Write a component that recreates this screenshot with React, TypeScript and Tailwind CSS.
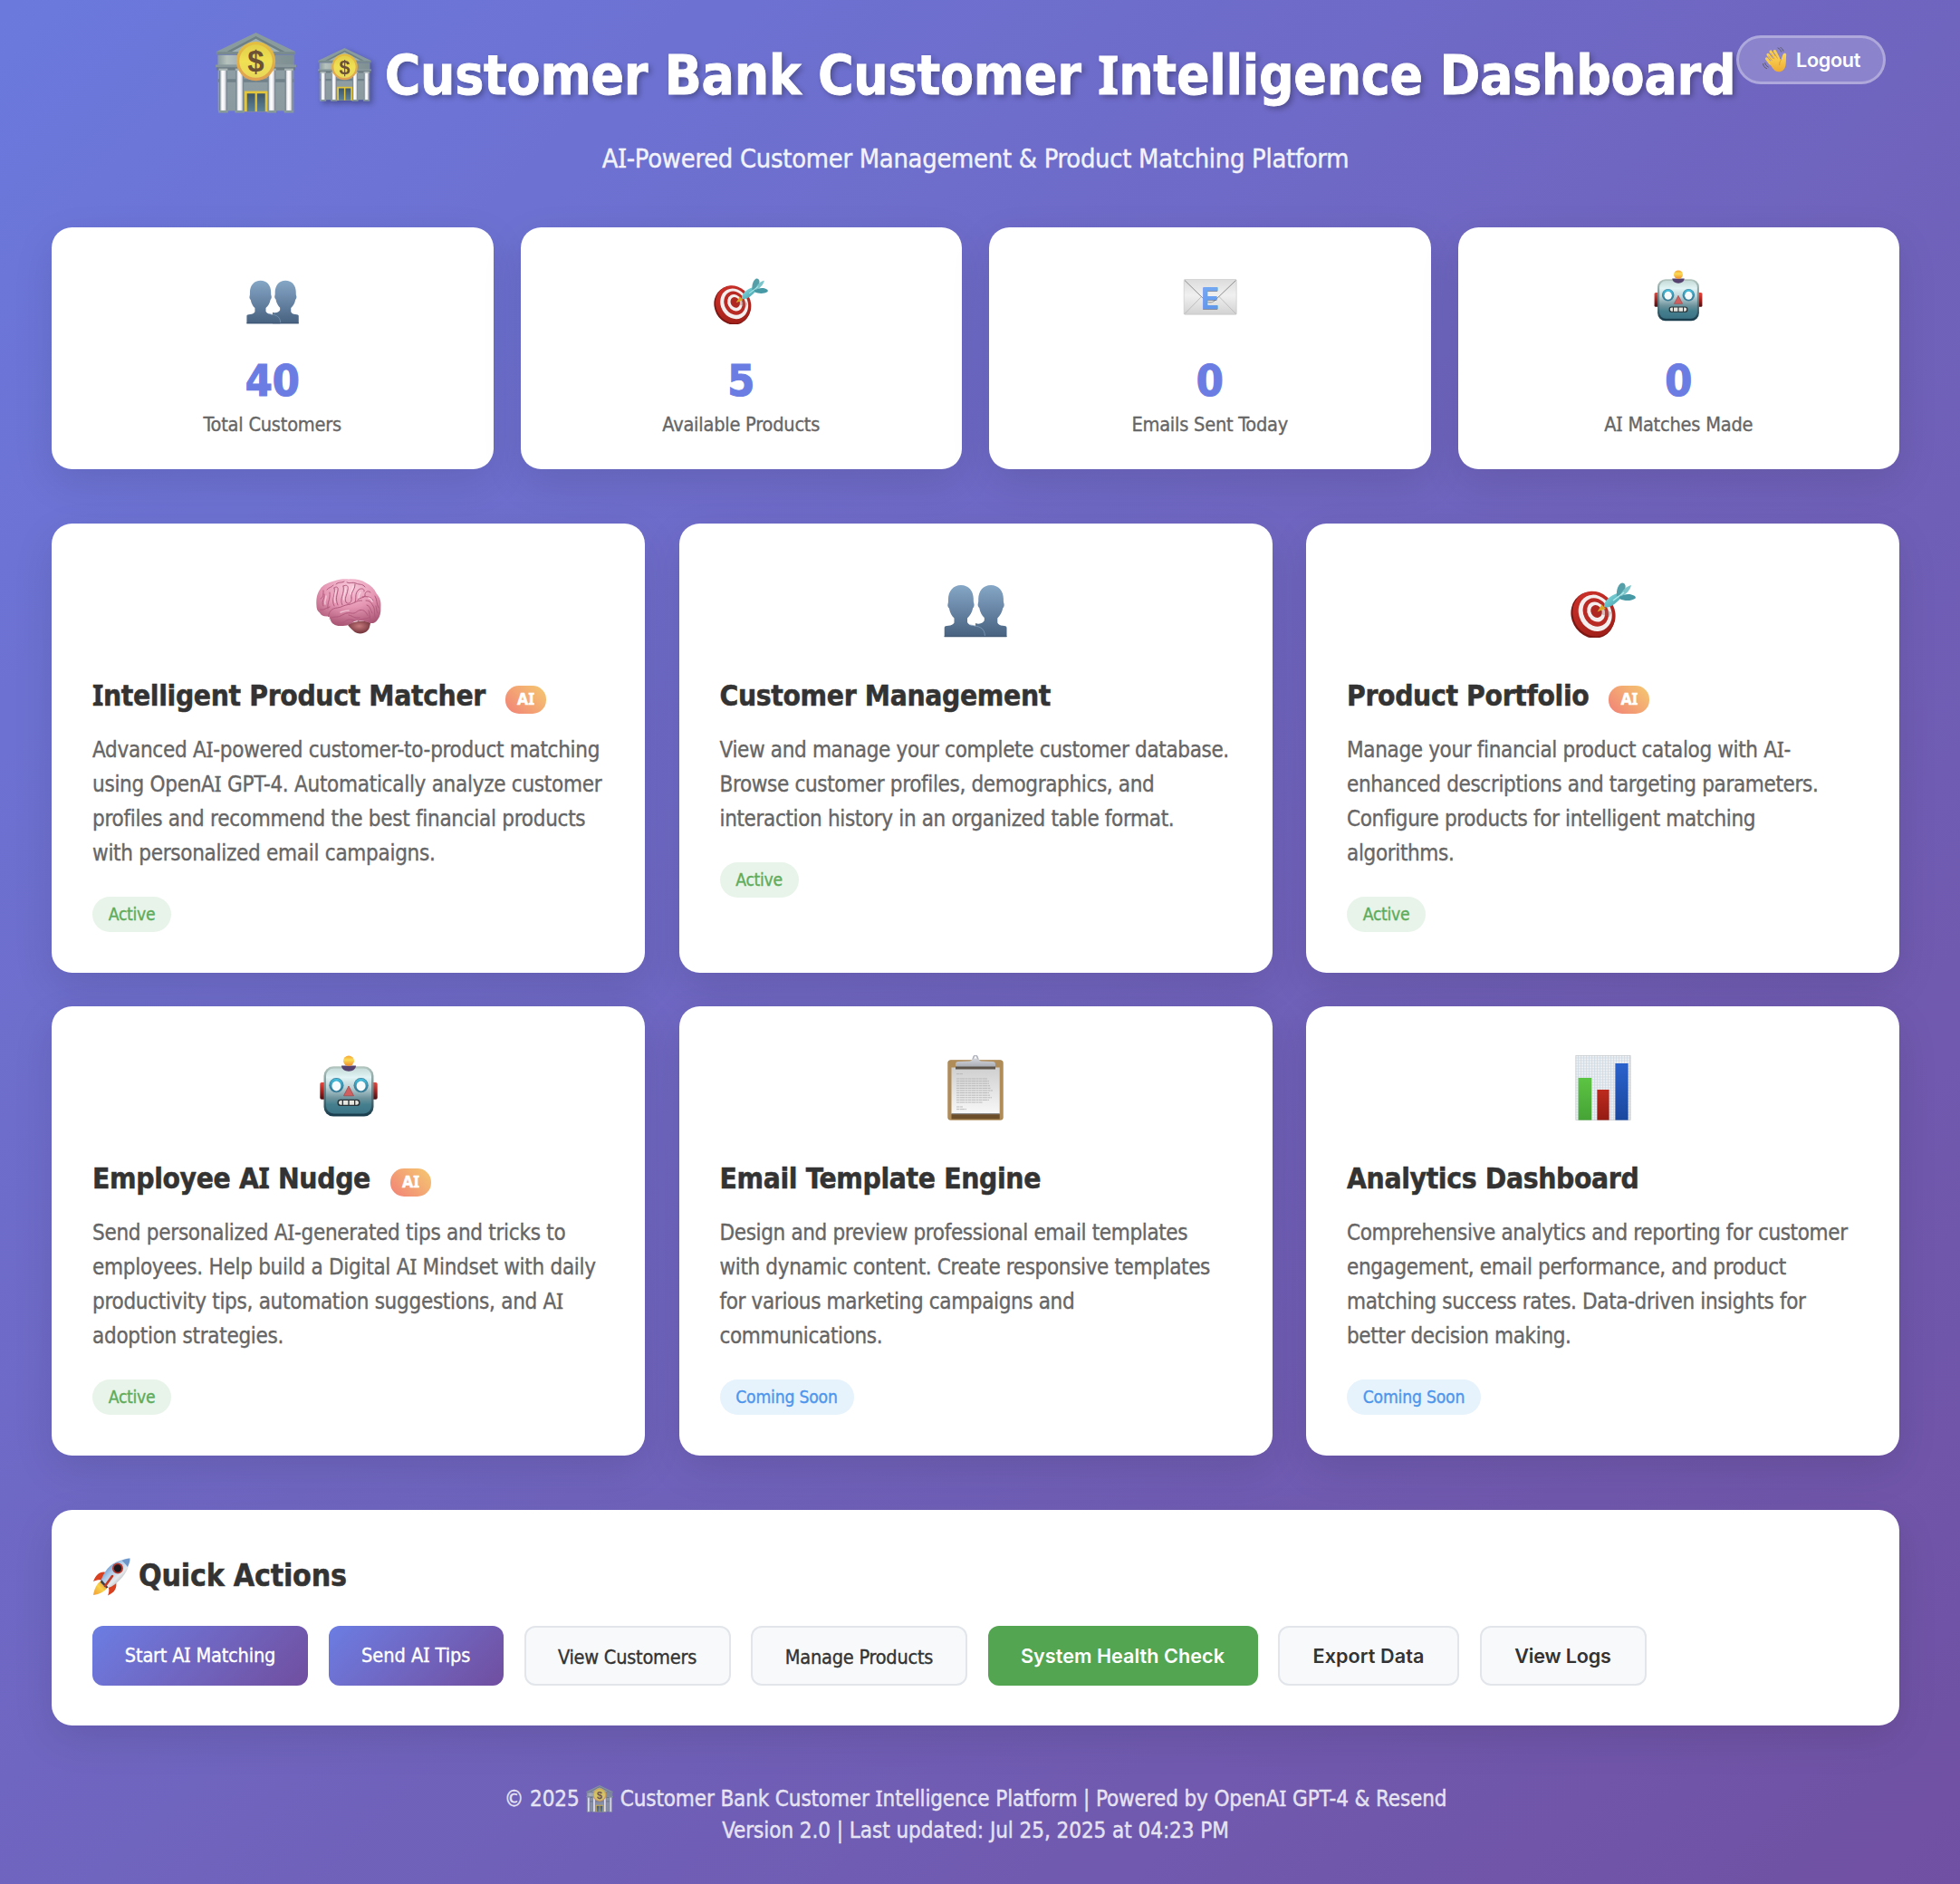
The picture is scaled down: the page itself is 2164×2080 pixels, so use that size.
import React, { Fragment } from "react";

type IconProps = { className?: string };

/* Capital I is set in a face that has serifs on that letter. */
function T({ children }: { children: string }) {
  return (
    <>
      {children.split(/(I)/).map((part, i) =>
        part === "I" ? (
          <span key={i} className="font-['Noto_Sans'] leading-[0]">
            I
          </span>
        ) : (
          <Fragment key={i}>{part}</Fragment>
        ),
      )}
    </>
  );
}

function Bank({ className }: IconProps) {
  return (
    <svg viewBox="0 0 100 100" className={className}>
      <defs>
        <linearGradient id="bk-wall" x1="0" x2="0" y1="0" y2="1">
          <stop offset="0" stopColor="#8fa0a6" />
          <stop offset="1" stopColor="#8b9a9f" />
        </linearGradient>
        <linearGradient id="bk-band" x1="0" x2="1">
          <stop offset="0" stopColor="#8b9c9c" />
          <stop offset=".12" stopColor="#b6c2bd" />
          <stop offset=".5" stopColor="#8b9a9e" />
          <stop offset="1" stopColor="#7f9092" />
        </linearGradient>
        <linearGradient id="bk-col" x1="0" x2="1">
          <stop offset="0" stopColor="#c9cbd2" />
          <stop offset=".35" stopColor="#ffffff" />
          <stop offset=".7" stopColor="#eeeef2" />
          <stop offset="1" stopColor="#a9acb8" />
        </linearGradient>
        <linearGradient id="bk-coin" x1="0" x2="0" y1="0" y2="1">
          <stop offset="0" stopColor="#e2d04a" />
          <stop offset=".5" stopColor="#f0e052" />
          <stop offset="1" stopColor="#e8d85a" />
        </linearGradient>
        <linearGradient id="bk-rim" x1="0" x2="0" y1="0" y2="1">
          <stop offset="0" stopColor="#e3bf3f" />
          <stop offset="1" stopColor="#e0a052" />
        </linearGradient>
        <linearGradient id="bk-door" x1="0" x2="0" y1="0" y2="1">
          <stop offset="0" stopColor="#3f5766" />
          <stop offset="1" stopColor="#5d8299" />
        </linearGradient>
      </defs>
      <rect x="3" y="28" width="94" height="69" fill="url(#bk-wall)" />
      <path d="M50 0 99 23.5V27H1v-3.500z" fill="#8a9b9d" />
      <path d="M50 4.500 86 23.500H14z" fill="#6f8085" />
      <path d="M50 7.500 80 23.500H20z" fill="#9fb1b5" />
      <path d="M1 24h98v3.500H1z" fill="#788a8d" />
      <rect x="3" y="28" width="94" height="12" fill="url(#bk-band)" />
      <path d="M0 40h100v3H0z" fill="#8a9a9c" />
      <path d="M1 43h98v3.500H1z" fill="#6b7b80" />
      <path d="M3 57.500h94v4H3z" fill="#70818a" />
      <path d="M34 46h32v11H34z" fill="#84969d" />
      {[6, 26.5, 66, 87.5].map((x) => (
        <g key={x}>
          <path d={`M${x - 1.5} 46h10v51h-10z`} fill="#76868f" />
          <rect x={x} y="45" width="7.300" height="52" fill="url(#bk-col)" />
          <path d={`M${x - 2} 44.500h11v2.500h-11z`} fill="#a9b4b6" />
          <path d={`M${x - 2.500} 96.500h12v3h-12z`} fill="#899a9b" />
        </g>
      ))}
      <path d="M36 72.500h28.500V98H36z" fill="#e4c63c" />
      <path d="M39 75.500h10V98H39zM51.500 75.500h10V98h-10z" fill="url(#bk-door)" />
      <circle cx="50" cy="35.500" r="24.300" fill="url(#bk-rim)" />
      <circle cx="50" cy="35.500" r="20.500" fill="url(#bk-coin)" />
      <text
        x="50"
        y="48.500"
        textAnchor="middle"
        fontFamily="Liberation Sans, sans-serif"
        fontWeight="700"
        fontSize="37"
        letterSpacing="0"
        fill="#6b5136"
      >
        $
      </text>
    </svg>
  );
}

function People({ className }: IconProps) {
  return (
    <svg viewBox="0 0 72 72" className={className}>
      <defs>
        <linearGradient id="pp" x1="0" x2="0" y1="14" y2="71" gradientUnits="userSpaceOnUse">
          <stop offset="0" stopColor="#86a7c6" />
          <stop offset=".45" stopColor="#6a87a8" />
          <stop offset="1" stopColor="#47617f" />
        </linearGradient>
      </defs>
      <path
        d="M53 14c8.500 0 13.800 6.500 13.900 15 0 2.500 0 4 .6 5.500.5 2-.1 4-1.200 4.800-1 5-3.300 8.700-6 11.200v5c.7 2 3 3 5.700 3.300 2.800.3 4.500.6 4.500 2.200V71H36V56c5 2 9-1 9.800-3v-3c-2.600-2.500-4.700-6-5.600-11-1.200-.9-2-3-1.400-4.800.6-1.500.4-3.200.4-5C39.400 20.500 44.500 14 53 14z"
        fill="url(#pp)"
      />
      <path
        d="M20 14c8.500 0 13.700 6.500 13.800 15 0 2.500 0 4 .6 5.500.5 2-.1 4-1.200 4.800-1 5-3.300 8.700-6.200 11.200v4.500c1 2.500 3.500 3.600 7.500 4 7.500.8 11.500 4 11.500 12H1.700V61c0-1.600 1.700-1.900 4.500-2.200 2.700-.3 5.400-1.300 6.300-3.300v-5c-2.600-2.500-4.700-6-5.600-11-1.200-.9-2-3-1.400-4.800.6-1.500.4-3.200.4-5C6 20.500 11.500 14 20 14z"
        fill="url(#pp)"
      />
      <path d="M30 58c10 1.500 16 2.500 16.500 12.500" fill="none" stroke="#7e9cba" strokeWidth=".8" />
      <path d="M1.700 70h68.700v1.200H1.700z" fill="#3f5773" />
    </svg>
  );
}

function Dart({ className }: IconProps) {
  return (
    <svg viewBox="0 0 72 72" className={className}>
      <defs>
        <linearGradient id="dt-c" x1="0" x2="1" y1="0" y2="1">
          <stop offset="0" stopColor="#8fe3e6" />
          <stop offset="1" stopColor="#3f9aa6" />
        </linearGradient>
        <linearGradient id="dt-r" x1="0" x2="0" y1="0" y2="1">
          <stop offset="0" stopColor="#c92f28" />
          <stop offset="1" stopColor="#a02019" />
        </linearGradient>
      </defs>
      <ellipse cx="24.600" cy="47" rx="23.600" ry="26.200" transform="rotate(-28 24.600 47)" fill="#7c1714" />
      <ellipse cx="26" cy="45.700" rx="23" ry="25.600" transform="rotate(-28 26 45.700)" fill="url(#dt-r)" />
      <ellipse cx="27.200" cy="44.800" rx="17.800" ry="20.800" transform="rotate(-28 27.200 44.800)" fill="#f4eeee" />
      <ellipse cx="27.800" cy="44" rx="13.600" ry="16.200" transform="rotate(-28 27.800 44)" fill="#b92a24" />
      <ellipse cx="28.200" cy="43.500" rx="9.500" ry="11.500" transform="rotate(-28 28.200 43.500)" fill="#f4eeee" />
      <ellipse cx="28.500" cy="43" rx="6" ry="7.200" transform="rotate(-28 28.500 43)" fill="#b02620" />
      <path d="m33 46 10 3 2-5-9-4z" fill="#8b6b6b" opacity=".35" />
      <path d="m29.500 43.500 5-8 4.500 4.500z" fill="#d9a62b" />
      <path d="M37 38c0-6 5-11 12-14 2-1 5.500-1.500 6.500 0s0 4.500-2 6.500c-5 5-11.500 9.500-16.500 7.500z" fill="url(#dt-c)" />
      <path d="M51 26c-.5-5 .5-11 4.500-14 2-1.500 4.500 0 5 2.500.8 4-2 9-6 12.500z" fill="#549fa8" />
      <path d="M55 25c2-5 6-9.500 12-11-1 5-5 9.500-10 12z" fill="#7cc6cb" />
      <path d="M54 27c5-3.500 12-4 16-1.500 2 1.200 2.500 2.500 1 3.500-4 2.500-11 3-17 0z" fill="#479aa5" />
      <path d="m47 31 12-9" stroke="#b5eeee" strokeWidth="1.200" />
    </svg>
  );
}

function Email({ className }: IconProps) {
  return (
    <svg viewBox="0 0 60 60" className={className}>
      <defs>
        <linearGradient id="em-bg" x1="0" x2="0" y1="0" y2="1">
          <stop offset="0" stopColor="#dcdcdc" />
          <stop offset=".45" stopColor="#f0f0f0" />
          <stop offset="1" stopColor="#d2d2d2" />
        </linearGradient>
        <linearGradient id="em-e" x1="0" x2="0" y1="0" y2="1">
          <stop offset="0" stopColor="#79aef5" />
          <stop offset="1" stopColor="#5b93ea" />
        </linearGradient>
      </defs>
      <rect x="1.200" y="10.500" width="58" height="38.700" rx="1" fill="url(#em-bg)" stroke="#c6c6c6" strokeWidth=".6" />
      <path d="m2 48.500 19-19.500M58.500 48.500 39.500 29" stroke="#b5b5b5" strokeWidth=".8" fill="none" />
      <path d="M2 11.500 25 34c3 2.500 7 2.500 10 0l23.500-22.500" stroke="#8f8f8f" strokeWidth="1" fill="none" />
      <g fontFamily="Inter, sans-serif" fontWeight="700" fontSize="33" textAnchor="middle">
        <text x="30" y="44" fill="#4d5c7a" opacity=".6">E</text>
        <text x="30" y="42.500" fill="url(#em-e)">E</text>
      </g>
    </svg>
  );
}

function Robot({ className }: IconProps) {
  return (
    <svg viewBox="0 0 72 72" className={className}>
      <defs>
        <linearGradient id="rb-h" x1="0" x2="0" y1="0" y2="1">
          <stop offset="0" stopColor="#c6dcd9" />
          <stop offset=".2" stopColor="#e2f4f5" />
          <stop offset=".42" stopColor="#bcd2d6" />
          <stop offset=".66" stopColor="#6d939c" />
          <stop offset=".8" stopColor="#457f8e" />
          <stop offset="1" stopColor="#3b7384" />
        </linearGradient>
        <linearGradient id="rb-s" x1="0" x2="0" y1="0" y2="1">
          <stop offset="0" stopColor="#b4c6bf" />
          <stop offset=".5" stopColor="#64878c" />
          <stop offset="1" stopColor="#16394a" />
        </linearGradient>
        <linearGradient id="rb-e" x1="0" x2="0" y1="0" y2="1">
          <stop offset="0" stopColor="#e8483f" />
          <stop offset=".5" stopColor="#a82420" />
          <stop offset="1" stopColor="#4c0d10" />
        </linearGradient>
        <linearGradient id="rb-b" x1="0" x2="0" y1="0" y2="1">
          <stop offset="0" stopColor="#f6a335" />
          <stop offset=".4" stopColor="#fbdc55" />
          <stop offset="1" stopColor="#ef8d2d" />
        </linearGradient>
        <linearGradient id="rb-i" x1="0" x2="0" y1="0" y2="1">
          <stop offset="0" stopColor="#45c1e0" />
          <stop offset="1" stopColor="#2e6f8d" />
        </linearGradient>
      </defs>
      <rect x="4.300" y="30" width="8" height="18.800" rx="1.800" fill="url(#rb-e)" />
      <rect x="59.700" y="30" width="8" height="18.800" rx="1.800" fill="url(#rb-e)" />
      <rect x="8.500" y="12.300" width="55" height="55.300" rx="10.500" fill="url(#rb-s)" />
      <rect x="11" y="14.500" width="50" height="50" rx="8.500" fill="url(#rb-h)" />
      <path d="M28 11.500h16c0 3.500-3.500 6.200-8 6.200s-8-2.700-8-6.200z" fill="#55426f" />
      <ellipse cx="36" cy="6.200" rx="6" ry="5.700" fill="url(#rb-b)" />
      {[22.400, 49.600].map((x) => (
        <g key={x}>
          <circle cx={x} cy="33.200" r="8.100" fill="#3e7f99" />
          <circle cx={x} cy="33" r="7.300" fill="url(#rb-i)" />
          <ellipse cx={x} cy="34" rx="5" ry="5.400" fill="#f7fbfb" />
        </g>
      ))}
      <path d="m36 34 5.500 10.800h-11z" fill="#d0605f" stroke="#a2474b" strokeWidth=".8" />
      <rect x="23.500" y="48.700" width="25" height="7.400" rx="3.400" fill="#2a3438" />
      <path d="M25 52.300c0-1.500.8-2.400 2.300-2.400h1.400v4.900h-1.400c-1.500 0-2.300-1-2.300-2.500zM30 49.900h5.300v4.900H30zM36.700 49.900H42v4.900h-5.300zM43.300 49.900h1.400c1.500 0 2.300.9 2.300 2.400s-.8 2.500-2.300 2.500h-1.400z" fill="#e6e6df" />
    </svg>
  );
}

function Brain({ className }: IconProps) {
  return (
    <svg viewBox="0 0 72 72" className={className}>
      <defs>
        <radialGradient id="br" cx=".52" cy=".18" r=".85">
          <stop offset="0" stopColor="#f8c9da" />
          <stop offset=".5" stopColor="#e596b3" />
          <stop offset="1" stopColor="#a4506f" />
        </radialGradient>
        <radialGradient id="br-s" cx=".5" cy=".4" r=".6">
          <stop offset="0" stopColor="#c77a7e" />
          <stop offset="1" stopColor="#6e3138" />
        </radialGradient>
      </defs>
      <path d="M35 58c5-4 20-6 25-2-1 4-1 6-3 8-3 3.500-10 4.500-14 2-2-1.500-6-5-8-8z" fill="url(#br-s)" />
      <path
        d="M.4 36C0 29 1 23 4.500 18.500 7 14 13 11.500 19.600 9.600 25 7.300 31 7.200 36 7.400c7-.5 14 .6 19 4 5.500 2.600 9.500 6.600 11.500 11.500 4 4.500 5.500 9 4.900 15.500.3 6-1 10.500-3.400 13.500-2.500 3.500-5 4.500-8.500 4-6-2.500-13-3.500-18-1.500-3 3-10 5.500-17 4.500-5.500-1-8.500-4-9-8-.5-1.500-1-2-2-2.500-5 .5-8-1-9.500-4C1.500 43 .4 40 .4 36z"
        fill="url(#br)"
      />
      <g fill="none" stroke="#b25a7c" strokeWidth="1" strokeLinecap="round" strokeLinejoin="round">
        <path d="M13.500 48.500c1-6 4-9 10-9.500 5-.5 7-3 12-3.500 6-.6 9-5 15-4.500M15 38c-4 1-6 4-10.500 3M15 51c5-3 8-1 12-3s7-4 12-3 6-3 10-3.500 6 2 8 6M20 56c5-1 8 1 12-2s7-2 10-1M36 47c5 1 6 4 12 3M46 54c5-4 10-2 14-5M61 55c-3-5-1-9-3-13M66 51c-3-4 0-9-3-14-2-3-3-6-8-6" />
        <path d="M8 37c-3-5 2-8 1-13M13 40c-1-7 3-10 2-18M5 29c3-1 3-5 3-9M20 37c-4-7 2-12 0-20M20 17c2-2 5-1 4 3-1 6-3 9 0 16M29 36c-4-7 3-12 1-21M30 15c4-2 6 0 5 4-1 7-4 9-2 14 3 3 7 0 6-5M39 28c-1-7 4-8 4-15M43 33c2-5-1-9 4-14 3-2 7-1 6 2M46 30c3-3 6-1 8-4M51 27c6-1 10 0 12 4M60 22c-3-3-7 0-6 4M22 13c3-3 6-1 9-3M34 11c3 2 6-1 10 1s7 0 10 4M12 19c2-3 5-2 7-5M65 26c3 5 1 8 4 13M56 36c4 1 4 6 6 9M68 45c-2-3-1-6-2-8" />
      </g>
      <g fill="none" stroke="#fde4ec" strokeWidth="1.600" strokeLinecap="round" opacity=".6">
        <path d="M22 20c-1 5-3 8-1 13M32.500 18c0 5-3 7-2 12M41 15c-1 5-3 5-3 9M11 26c0 4-2 5-1 9M49 22c-2 2-2 4-2 6M27 44c3-1 5-2 9-2M58 28c3 1 3 2 4 4" />
      </g>
    </svg>
  );
}

function Clipboard({ className }: IconProps) {
  return (
    <svg viewBox="0 0 72 72" className={className}>
      <defs>
        <linearGradient id="cb-p" x1="0" x2="0" y1="0" y2="1">
          <stop offset="0" stopColor="#cfcfcf" />
          <stop offset="1" stopColor="#f8f8f8" />
        </linearGradient>
        <linearGradient id="cb-c" x1="0" x2="0" y1="0" y2="1">
          <stop offset="0" stopColor="#d4d6dc" />
          <stop offset="1" stopColor="#a8abb3" />
        </linearGradient>
      </defs>
      <rect x="5.300" y="5.200" width="61.400" height="66.500" rx="3.500" fill="#a98450" />
      <rect x="6" y="5.800" width="60" height="65.200" rx="3" fill="#b08c58" />
      <path d="M9.500 65h53.200v5.500H9.500z" fill="#6c4e2a" />
      <rect x="9.500" y="13.500" width="53.200" height="51" fill="url(#cb-p)" />
      <path d="M9.500 64h53.200v1.200H9.500z" fill="#8e8e8e" />
      <path d="M33 7c0-4 1.500-6.800 3-6.800S39 3 39 7z" fill="none" stroke="#b2b5bd" strokeWidth="1.800" />
      <path d="M30 6.500c3-1 3-3 6-3s3 2 6 3l13 .5c2 0 3 1 3 3v3H14v-3c0-2 1-3 3-3z" fill="url(#cb-c)" />
      <path d="M14 12.600h44v2.900H14z" fill="#5d554c" />
      <g stroke="#b4b4b4" strokeWidth=".9" strokeDasharray="3.500 .5 5 .5 2.500 .5">
        <path d="M15 20.700h7M15 26h34M15 28.600h36M15 31.200h36M15 33.800h37M15 36.400h38M15 39h40M15 41.600h36M15 44.200h37M15 46.800h39M15 49.400h36M15 52h29M15 57h7M15 59.600h11" />
      </g>
    </svg>
  );
}

function Chart({ className }: IconProps) {
  const cols = Array.from({ length: 20 }, (_, i) => 8.600 + i * 3);
  const rows = Array.from({ length: 23 }, (_, i) => 3 + i * 3);
  return (
    <svg viewBox="0 0 72 72" className={className}>
      <defs>
        <linearGradient id="ch-g" x1="0" x2="0" y1="0" y2="1">
          <stop offset="0" stopColor="#5cc443" />
          <stop offset="1" stopColor="#46a336" />
        </linearGradient>
        <linearGradient id="ch-r" x1="0" x2="0" y1="0" y2="1">
          <stop offset="0" stopColor="#bd2a1e" />
          <stop offset="1" stopColor="#951c14" />
        </linearGradient>
        <linearGradient id="ch-b" x1="0" x2="0" y1="0" y2="1">
          <stop offset="0" stopColor="#2a62cc" />
          <stop offset="1" stopColor="#1b479e" />
        </linearGradient>
      </defs>
      <rect x="5.600" y="0" width="60.700" height="71.800" fill="#f0f2f4" />
      <g stroke="#c9d5e0" strokeWidth=".7">
        {cols.map((x) => <path key={x} d={`M${x} 0v71.800`} />)}
        {rows.map((y) => <path key={y} d={`M5.600 ${y}h60.700`} />)}
      </g>
      <rect x="5.900" y=".3" width="60.100" height="71.200" fill="none" stroke="#c5c9cc" strokeWidth=".8" />
      <rect x="8.600" y="25" width="14.600" height="46.600" fill="url(#ch-g)" />
      <rect x="29.400" y="38" width="13.200" height="33.600" fill="url(#ch-r)" />
      <rect x="49.400" y="9" width="14.200" height="62.600" fill="url(#ch-b)" />
    </svg>
  );
}

function Rocket({ className }: IconProps) {
  return (
    <svg viewBox="0 0 42 42" className={className}>
      <defs>
        <linearGradient id="rk-b" x1="0" y1="0" x2="1" y2="1">
          <stop offset=".1" stopColor="#3a6db0" />
          <stop offset=".4" stopColor="#a9c8e8" />
          <stop offset=".6" stopColor="#e6e9ec" />
          <stop offset="1" stopColor="#5c636b" />
        </linearGradient>
        <linearGradient id="rk-f" x1="1" y1="0" x2="0" y2="1">
          <stop offset="0" stopColor="#e8732b" />
          <stop offset=".5" stopColor="#f8d34a" />
          <stop offset="1" stopColor="#f29a35" />
        </linearGradient>
      </defs>
      <path d="M16 16C9 14 4 18 1 26c4-2 8-2 11-1z" fill="#d8401f" />
      <path d="M26 26c1.500 7-1 12-9 15.500C19 37 18.500 34 17 30z" fill="#d8401f" />
      <path d="M10 25c-5 3-8 9-9 16 7-1 13-4 16-9z" fill="url(#rk-f)" />
      <path d="M41.500.6C32 1 20 6 14 15.500 11 20.500 9.500 24 9 27l6.500 6.500C19 33 23.500 30.500 27.500 27 36 19.500 41.500 10 41.500.6z" fill="url(#rk-b)" />
      <path d="M9 27l6.500 6.500 2-1L10 24z" fill="#3b3f46" />
      <path d="M41.500.6c-3 .2-6 1-9 2.300 2 1.500 4.500 4 6.300 7C40.500 7 41.500 4 41.500.6z" fill="#6d97cb" />
      <circle cx="28" cy="11.500" r="6" fill="#b53a31" />
      <circle cx="28" cy="11.500" r="4.200" fill="#1f1a20" />
      <path d="m22 20-8 11" stroke="#c23b24" strokeWidth="2.600" strokeLinecap="round" />
    </svg>
  );
}

function Wave({ className }: IconProps) {
  return (
    <svg viewBox="0 0 28 28" className={className}>
      <defs>
        <linearGradient id="wv" x1="0" x2="0" y1="0" y2="1">
          <stop offset="0" stopColor="#fbd95c" />
          <stop offset="1" stopColor="#efab32" />
        </linearGradient>
      </defs>
      <g fill="none" stroke="#f8ce50" strokeWidth="3.100" strokeLinecap="round">
        <path d="M8.500 18 4.500 12.800M11 15 6 8.300M14 13 9 5M17.500 12.500 13.500 4.500" />
      </g>
      <path d="M7.500 16.500 15 9.500l5.500 4.500c.8-2 1.300-4.500 2.500-6.500.8-1.300 3.400-.9 3.200 1-.5 4.500 0 8-.8 12-.9 4.300-3.800 6.800-7.400 6.800-5 0-8-5-10.500-10.800z" fill="url(#wv)" />
      <path d="m10.500 15-4-5.300M13.300 13.200 9.200 7M16.500 12.500l-3.700-6.200M20.500 14c-1.500 2-2 4-1.700 6" stroke="#c98525" strokeWidth=".6" fill="none" />
      <path d="M17 1c2 .8 3 2 3.500 4M19.700.3c1.700.9 2.700 2.200 3.200 4M2.800 17.500c.4 2.200 1.400 3.500 3.500 4.500M.6 18.500c.3 2.600 1.600 4.300 4 5.200" stroke="#5c5a68" strokeWidth="1" fill="none" strokeLinecap="round" />
    </svg>
  );
}

const stats = [
  { Icon: People, value: "40", label: "Total Customers" },
  { Icon: Dart, value: "5", label: "Available Products" },
  { Icon: Email, value: "0", label: "Emails Sent Today" },
  { Icon: Robot, value: "0", label: "AI Matches Made" },
];

const features = [
  {
    Icon: Brain,
    title: "Intelligent Product Matcher",
    ai: true,
    active: true,
    tracking: "tracking-[-0.28px]",
    lines: [
      "Advanced AI-powered customer-to-product matching",
      "using OpenAI GPT-4. Automatically analyze customer",
      "profiles and recommend the best financial products",
      "with personalized email campaigns.",
    ],
  },
  {
    Icon: People,
    title: "Customer Management",
    ai: false,
    active: true,
    tracking: "tracking-[-0.35px]",
    lines: [
      "View and manage your complete customer database.",
      "Browse customer profiles, demographics, and",
      "interaction history in an organized table format.",
    ],
  },
  {
    Icon: Dart,
    title: "Product Portfolio",
    ai: true,
    active: true,
    tracking: "tracking-[-0.35px]",
    lines: [
      "Manage your financial product catalog with AI-",
      "enhanced descriptions and targeting parameters.",
      "Configure products for intelligent matching",
      "algorithms.",
    ],
  },
  {
    Icon: Robot,
    title: "Employee AI Nudge",
    ai: true,
    active: true,
    tracking: "tracking-[-0.28px]",
    lines: [
      "Send personalized AI-generated tips and tricks to",
      "employees. Help build a Digital AI Mindset with daily",
      "productivity tips, automation suggestions, and AI",
      "adoption strategies.",
    ],
  },
  {
    Icon: Clipboard,
    title: "Email Template Engine",
    ai: false,
    active: false,
    tracking: "tracking-[-0.36px]",
    lines: [
      "Design and preview professional email templates",
      "with dynamic content. Create responsive templates",
      "for various marketing campaigns and",
      "communications.",
    ],
  },
  {
    Icon: Chart,
    title: "Analytics Dashboard",
    ai: false,
    active: false,
    tracking: "tracking-[-0.36px]",
    lines: [
      "Comprehensive analytics and reporting for customer",
      "engagement, email performance, and product",
      "matching success rates. Data-driven insights for",
      "better decision making.",
    ],
  },
];

const primary = "bg-linear-135 from-[#6b7de3] to-[#704e9f] text-white leading-[64px]";
const outline = "border-2 border-[#e2e5ea] bg-[#f8f9fb] text-[#333]";
const inter = "font-['Inter'] font-semibold [-webkit-text-stroke:0px]";

const actions = [
  { label: "Start AI Matching", cls: `w-[238px] tracking-[-0.2px] ${primary}` },
  { label: "Send AI Tips", cls: `w-[193.5px] tracking-[-0.05px] ${primary}` },
  { label: "View Customers", cls: `w-[228px] tracking-[-0.25px] leading-[65px] ${outline}` },
  { label: "Manage Products", cls: `w-[239px] tracking-[-0.25px] leading-[65px] ${outline}` },
  { label: "System Health Check", cls: `w-[298px] tracking-[0.05px] leading-[66px] bg-[#54a551] text-white ${inter}` },
  { label: "Export Data", cls: `w-[200px] tracking-[0.08px] leading-[62px] ${outline} ${inter}` },
  { label: "View Logs", cls: `w-[184px] tracking-[-0.2px] leading-[62px] ${outline} ${inter}` },
];

export default function App() {
  return (
    <div className="relative h-[2080px] w-[2164px] overflow-hidden bg-linear-135 from-[#6b79dd] to-[#7050a2] pr-[67px] pl-[57px] font-['DejaVu_Sans_Condensed','DejaVu_Sans',sans-serif] whitespace-nowrap [-webkit-text-stroke:0.35px]">
      <button className="absolute top-[39px] right-[82px] flex h-[54px] w-[165px] items-center gap-[9px] rounded-full border-[3px] border-white/30 bg-white/20 pl-[26px] font-['Inter'] text-[21.6px] font-semibold tracking-[-0.3px] text-white [-webkit-text-stroke:0px]">
        <Wave className="size-7 shrink-0" />
        Logout
      </button>

      <header className="flex flex-col items-center pt-[34px]">
        <div className="flex items-start">
          <Bank className="mt-[2px] mr-6 size-[89px] [-webkit-text-stroke:0px]" />
          <h1 className="mt-[13px] flex text-[60px] leading-[72px] font-bold tracking-[-0.26px] text-white [-webkit-text-stroke:0.8px] [text-shadow:3px_3px_6px_rgba(0,0,0,0.3)]">
            <Bank className="mt-[6px] mr-[15px] size-[59px] drop-shadow-[3px_3px_3px_rgba(0,0,0,0.3)] [-webkit-text-stroke:0px] [text-shadow:none]" />
            <span>
              <T>Customer Bank Customer Intelligence Dashboard</T>
            </span>
          </h1>
        </div>
        <p className="mt-[30px] text-[28.8px] leading-10 tracking-[-0.26px] text-white/90">
          <T>AI-Powered Customer Management & Product Matching Platform</T>
        </p>
      </header>

      <section className="mt-14 grid grid-cols-4 gap-[30px]">
        {stats.map(({ Icon, value, label }) => (
          <div key={label} className="flex h-[267px] flex-col items-center rounded-[22.5px] bg-white pt-[46.5px] shadow-[0_15px_45px_rgba(0,0,0,0.1)]">
            <Icon className="size-[60px] [-webkit-text-stroke:0px]" />
            <div className="mt-[33.5px] text-[48px] leading-[58px] font-bold text-[#6b7de3] [-webkit-text-stroke:1.2px]">{value}</div>
            <div className="mt-[5px] text-[21.6px] leading-[30px] tracking-[-0.22px] text-[#666]">
              <T>{label}</T>
            </div>
          </div>
        ))}
      </section>

      <section className="mt-[60px] grid grid-cols-3 gap-x-[37.5px] gap-y-[37px]">
        {features.map(({ Icon, title, ai, active, tracking, lines }) => (
          <div key={title} className="h-[496px] rounded-[22.5px] bg-white px-[45px] pt-[54px] shadow-[0_15px_45px_rgba(0,0,0,0.1)]">
            <Icon className="mx-auto size-[72px]" />
            <div className="mt-11 flex h-10 items-start">
              <h2 className="text-[31.5px] leading-10 font-bold tracking-[-0.35px] text-[#333] [-webkit-text-stroke:0.5px]">
                <T>{title}</T>
              </h2>
              {ai && (
                <span className="mt-[9px] ml-[22px] h-[31px] w-[45px] rounded-[15px] bg-linear-45 from-[#f08076] to-[#f4c96f] text-center text-[17.5px] leading-[31px] font-bold text-white [-webkit-text-stroke:0.5px]">
                  <T>AI</T>
                </span>
              )}
            </div>
            <p className={`mt-[21px] text-[24px] leading-[38px] text-[#666] ${tracking}`}>
              {lines.map((l) => (
                <span key={l} className="block">
                  <T>{l}</T>
                </span>
              ))}
            </p>
            <span
              className={
                active
                  ? "mt-[29px] block h-[39px] w-[87px] rounded-full bg-[#e8f4e9] text-center text-[19.2px] leading-[40px] tracking-[-0.3px] text-[#5eac5b]"
                  : "mt-[29px] block h-[39px] w-[148px] rounded-full bg-[#e6f2fc] text-center text-[19.2px] leading-[40px] tracking-[-0.2px] text-[#4d96ec]"
              }
            >
              {active ? "Active" : "Coming Soon"}
            </span>
          </div>
        ))}
      </section>

      <section className="mt-[60px] h-[238px] rounded-[22.5px] bg-white px-[45px] pt-[52px] shadow-[0_15px_45px_rgba(0,0,0,0.1)]">
        <h2 className="flex items-start text-[33.6px] leading-[42px] font-bold tracking-[-0.2px] text-[#333] [-webkit-text-stroke:0.5px]">
          <Rocket className="mt-[1px] mr-[9px] size-[42px]" />
          Quick Actions
        </h2>
        <div className="mt-[33px] flex gap-[22.5px]">
          {actions.map(({ label, cls }) => (
            <button key={label} className={`h-[66px] shrink-0 rounded-xl text-center text-[21.6px] ${cls}`}>
              <T>{label}</T>
            </button>
          ))}
        </div>
      </section>

      <footer className="mt-16 text-center text-[24px] leading-[34.5px] tracking-[-0.05px] text-white/80">
        <p className="flex items-start justify-center">
          © 2025
          <Bank className="mt-[2px] mr-[8px] ml-[7px] size-[30px] opacity-80 [-webkit-text-stroke:0px]" />
          <span className="tracking-[-0.12px]">
            <T>Customer Bank Customer Intelligence Platform | Powered by OpenAI GPT-4 & Resend</T>
          </span>
        </p>
        <p>Version 2.0 | Last updated: Jul 25, 2025 at 04:23 PM</p>
      </footer>
    </div>
  );
}
